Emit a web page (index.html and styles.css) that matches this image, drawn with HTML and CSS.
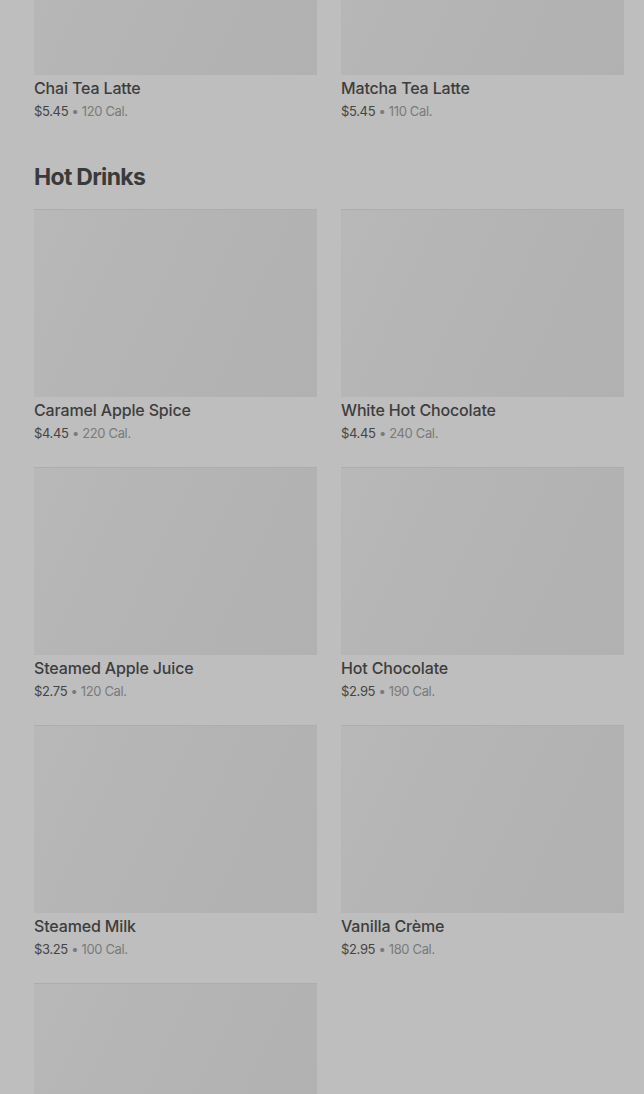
FILE: index.html
```html
<!DOCTYPE html>
<html lang="en">
<head>
  <meta charset="UTF-8" />
  <title>Menu</title>
  <link rel="stylesheet" href="styles.css">
</head>
<body>
  <div class="menu">

    <!-- Section précédente (partiellement défilée) -->
    <section class="section first">
      <div class="grid">
        <div class="item">
          <div class="thumb"></div>
          <p class="name">Chai Tea Latte</p>
          <p class="meta"><span class="price">$5.45</span> • 120 Cal.</p>
        </div>
        <div class="item">
          <div class="thumb"></div>
          <p class="name">Matcha Tea Latte</p>
          <p class="meta"><span class="price">$5.45</span> • 110 Cal.</p>
        </div>
      </div>
    </section>

    <section class="section">
      <h2>Hot Drinks</h2>
      <div class="grid">
        <div class="item">
          <div class="thumb"></div>
          <p class="name">Caramel Apple Spice</p>
          <p class="meta"><span class="price">$4.45</span> • 220 Cal.</p>
        </div>
        <div class="item">
          <div class="thumb"></div>
          <p class="name">White Hot Chocolate</p>
          <p class="meta"><span class="price">$4.45</span> • 240 Cal.</p>
        </div>
        <div class="item">
          <div class="thumb"></div>
          <p class="name">Steamed Apple Juice</p>
          <p class="meta"><span class="price">$2.75</span> • 120 Cal.</p>
        </div>
        <div class="item">
          <div class="thumb"></div>
          <p class="name">Hot Chocolate</p>
          <p class="meta"><span class="price">$2.95</span> • 190 Cal.</p>
        </div>
        <div class="item">
          <div class="thumb"></div>
          <p class="name">Steamed Milk</p>
          <p class="meta"><span class="price">$3.25</span> • 100 Cal.</p>
        </div>
        <div class="item">
          <div class="thumb"></div>
          <p class="name">Vanilla Crème</p>
          <p class="meta"><span class="price">$2.95</span> • 180 Cal.</p>
        </div>
        <div class="item">
          <div class="thumb"></div>
        </div>
      </div>
    </section>

  </div>
</body>
</html>
```

FILE: styles.css
```css
body {
  margin: 0;
  background-color: #bebebe;
  font-family: Inter, "Noto Sans", sans-serif;
  overflow: hidden;
  height: 1094px;
}

.menu {
  padding: 0 20px 0 34px;
}

/* page défilée : la première section commence hors écran */
.section.first {
  margin-top: -113px;
}

h2 {
  margin: 40px 0 16px;
  font-size: 23px;
  line-height: 32px;
  font-weight: 700;
  letter-spacing: -0.7px;
  color: #3a3a3a;
}

.grid {
  display: grid;
  grid-template-columns: 283px 283px;
  column-gap: 24px;
  row-gap: 24px;
}

.thumb {
  height: 188px;
  background: linear-gradient(115deg, #b8b8b8 0%, #b4b4b4 45%, #b1b1b1 100%);
  border-top: 1px solid #adadad;
  box-sizing: border-box;
}

.name {
  margin: 3px 0 0;
  font-size: 16px;
  line-height: 20px;
  font-weight: 500;
  letter-spacing: -0.15px;
  color: #3d3d3d;
}

.meta {
  margin: 3px 0 0;
  font-size: 13px;
  line-height: 20px;
  letter-spacing: -0.35px;
  color: #7a7a7a;
}

.price {
  color: #454545;
}
```
